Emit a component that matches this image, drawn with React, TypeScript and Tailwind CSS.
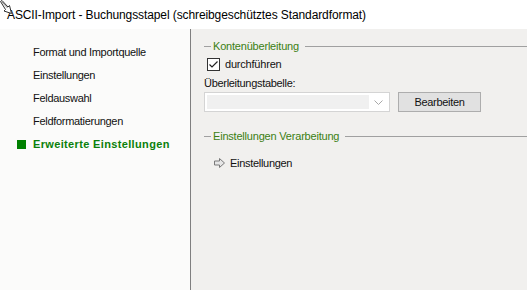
import React from "react";

const navItems = [
  "Format und Importquelle",
  "Einstellungen",
  "Feldauswahl",
  "Feldformatierungen",
];

function GroupHeader({ title }: { title: string }) {
  return (
    <div className="flex items-center h-[14px]">
      <div className="w-[7px] h-px bg-[#a0a0a0]" />
      <span className="ml-[2px] text-[11px] leading-[14px] tracking-[-0.2px] text-[#3b7f12] whitespace-nowrap">
        {title}
      </span>
      <div className="ml-[6px] flex-1 h-px bg-[#a0a0a0]" />
    </div>
  );
}

export default function App() {
  return (
    <div
      className="relative w-[527px] h-[290px] overflow-hidden flex flex-col bg-white text-black"
      style={{ fontFamily: '"Liberation Sans", Arial, sans-serif' }}
    >
      {/* cursor overlay */}
      <svg
        className="absolute left-0 top-0"
        width="13"
        height="15"
        viewBox="0 0 13 15"
      >
        <path
          d="M0.5 1.5 L2 0.5 L8 7 L9.5 5.5 L11.5 13.5 L4 11 L5.5 9.5 Z"
          fill="#ffffff"
          stroke="#303030"
          strokeWidth="1"
          strokeLinejoin="round"
        />
        <path d="M2 2 L7.5 8" stroke="#909090" strokeWidth="1" />
      </svg>

      {/* title bar */}
      <div className="h-[29px] shrink-0 flex items-center pl-[7px] bg-white">
        <span className="text-[12px] tracking-[-0.1px] whitespace-nowrap text-black">
          ASCII-Import - Buchungsstapel (schreibgeschütztes Standardformat)
        </span>
      </div>

      {/* body */}
      <div className="flex flex-1">
        {/* left nav */}
        <div className="w-[191px] shrink-0 bg-[#fbfbfa] border-r border-[#7f7f7f] pt-[12px]">
          {navItems.map((t) => (
            <div key={t} className="flex items-center h-[23px] pl-[17px]">
              <div className="w-[9px] mr-[7px]" />
              <span className="text-[11px] tracking-[-0.3px] text-[#111]">{t}</span>
            </div>
          ))}
          <div className="flex items-center h-[23px] pl-[17px]">
            <div className="w-[9px] h-[9px] mr-[7px] bg-[#008000]" />
            <span className="text-[11px] font-bold tracking-[0.35px] text-[#0a800a]">
              Erweiterte Einstellungen
            </span>
          </div>
        </div>

        {/* right panel */}
        <div className="flex-1 bg-[#f1f0ee] pt-[10px] pl-[13px]">
          <GroupHeader title="Kontenüberleitung" />

          <div className="mt-[5px] pl-[3px] flex items-center h-[13px]">
            <div className="w-[13px] h-[13px] border border-[#333] bg-white flex items-center justify-center">
              <svg width="11" height="11" viewBox="0 0 11 11">
                <path
                  d="M1.5 5.5 L4 8 L9.5 2.5"
                  fill="none"
                  stroke="#222"
                  strokeWidth="1.2"
                />
              </svg>
            </div>
            <span className="ml-[5px] text-[11px] tracking-[-0.2px] text-[#111]">
              durchführen
            </span>
          </div>

          <div className="mt-[6px] h-[13px] flex items-center text-[11px] tracking-[-0.3px] text-[#111]">
            Überleitungstabelle:
          </div>

          <div className="mt-[2px] flex">
            <div className="w-[186px] h-[20px] border border-[#d4d4d4] bg-white p-[2px] flex">
              <div className="flex-1 bg-[#f0f0f0]" />
              <div className="w-[18px] flex items-center justify-center">
                <svg width="9" height="5" viewBox="0 0 9 5">
                  <path d="M0.5 0.5 L4.5 4.5 L8.5 0.5" fill="none" stroke="#a8a8a8" strokeWidth="1" />
                </svg>
              </div>
            </div>
            <button className="ml-[8px] w-[83px] h-[20px] bg-[#e1e1e1] border border-[#adadad] flex items-center justify-center text-[11px] tracking-[-0.3px] text-[#111]">
              Bearbeiten
            </button>
          </div>

          <div className="mt-[17px]">
            <GroupHeader title="Einstellungen Verarbeitung" />
          </div>

          <div className="mt-[13px] pl-[10px] flex items-center h-[14px]">
            <svg width="11" height="10" viewBox="0 0 11 10">
              <path
                d="M0.5 3 H5.5 V0.5 L10.5 5 L5.5 9.5 V7 H0.5 Z"
                fill="#e6e6e6"
                stroke="#7a7a7a"
                strokeWidth="1"
                strokeLinejoin="miter"
              />
            </svg>
            <span className="ml-[5px] text-[11px] tracking-[-0.3px] text-[#111]">
              Einstellungen
            </span>
          </div>
        </div>
      </div>
    </div>
  );
}
